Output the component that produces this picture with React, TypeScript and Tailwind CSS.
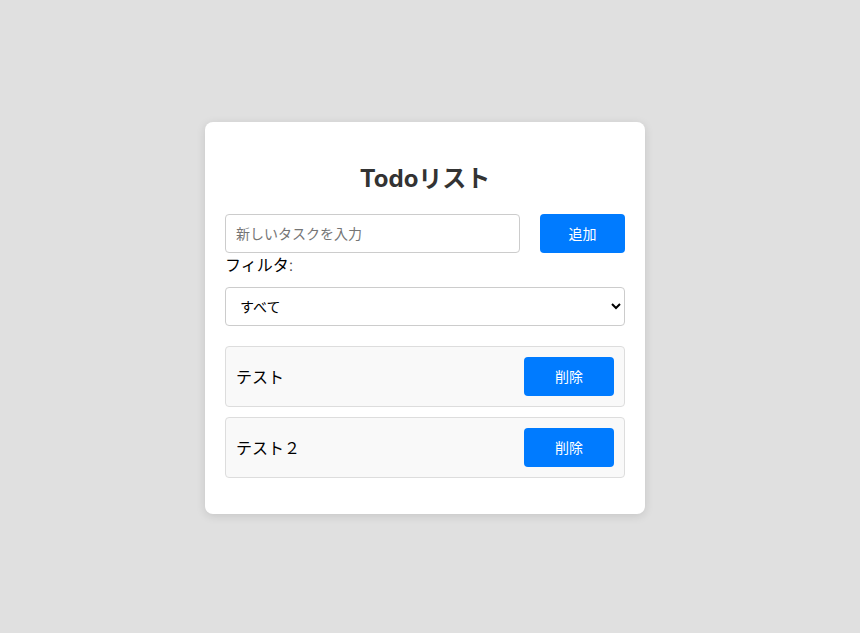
import React, { useState } from 'react';

type Todo = { id: number; text: string; done: boolean };

export default function App() {
  const [todos, setTodos] = useState<Todo[]>([
    { id: 1, text: 'テスト', done: false },
    { id: 2, text: 'テスト２', done: false },
  ]);
  const [input, setInput] = useState('');
  const [filter, setFilter] = useState('all');

  const addTodo = () => {
    if (!input.trim()) return;
    setTodos([...todos, { id: Date.now(), text: input, done: false }]);
    setInput('');
  };

  const visible = todos.filter((t) =>
    filter === 'all' ? true : filter === 'done' ? t.done : !t.done
  );

  return (
    <div
      className="min-h-screen bg-[#e0e0e0] flex justify-center pt-[122px] pr-[10px]"
      style={{ fontFamily: 'Inter, "Noto Sans CJK JP", sans-serif' }}
    >
      <div className="w-[440px] h-fit bg-white rounded-lg shadow-[0_2px_10px_rgba(0,0,0,0.12)] px-[20px] pt-[20px] pb-[36px]">
        <h1 className="mt-[19px] mb-[17px] text-center text-[24px] leading-[36px] font-bold text-[#333]">
          Todoリスト
        </h1>

        <div className="flex gap-[20px]">
          <input
            className="w-[295px] h-[39px] border border-[#ccc] rounded px-[10px] text-[14px] text-black placeholder:text-[#757575] outline-none"
            placeholder="新しいタスクを入力"
            value={input}
            onChange={(e) => setInput(e.target.value)}
          />
          <button
            className="w-[85px] h-[39px] bg-[#007bff] text-white text-[14px] rounded"
            onClick={addTodo}
          >
            追加
          </button>
        </div>

        <label className="block text-[16px] leading-[24px] text-black">
          フィルタ<span className="font-light text-[#444]">:</span>
        </label>
        <select
          className="mt-[10px] w-full h-[39px] border border-[#ccc] rounded px-[10px] text-[14px] text-black bg-white"
          value={filter}
          onChange={(e) => setFilter(e.target.value)}
        >
          <option value="all">すべて</option>
          <option value="active">未完了</option>
          <option value="done">完了</option>
        </select>

        <ul className="mt-[20px] flex flex-col gap-[10px]">
          {visible.map((t) => (
            <li
              key={t.id}
              className="flex items-center justify-between bg-[#f9f9f9] border border-[#ddd] rounded p-[10px]"
            >
              <span className="text-[16px] text-black">{t.text}</span>
              <button
                className="w-[90px] h-[39px] bg-[#007bff] text-white text-[14px] rounded"
                onClick={() => setTodos(todos.filter((x) => x.id !== t.id))}
              >
                削除
              </button>
            </li>
          ))}
        </ul>
      </div>
    </div>
  );
}
